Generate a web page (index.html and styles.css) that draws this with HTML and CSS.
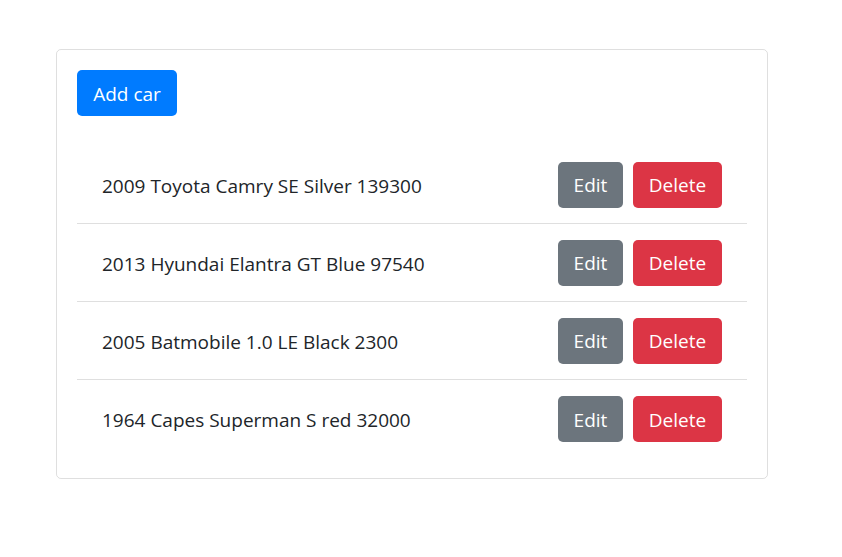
FILE: index.html
```html
<!DOCTYPE html>
<html>
<head>
<meta charset="utf-8">
<link rel="stylesheet" href="styles.css">
</head>
<body>
<div class="page">
  <div class="card">
    <div class="card-body">
      <button class="btn btn-primary">Add car</button>
      <ul class="list">
        <li class="item"><span class="label">2009 Toyota Camry SE Silver 139300</span><span class="actions"><button class="btn btn-secondary">Edit</button><button class="btn btn-danger">Delete</button></span></li>
        <li class="item"><span class="label">2013 Hyundai Elantra GT Blue 97540</span><span class="actions"><button class="btn btn-secondary">Edit</button><button class="btn btn-danger">Delete</button></span></li>
        <li class="item"><span class="label">2005 Batmobile 1.0 LE Black 2300</span><span class="actions"><button class="btn btn-secondary">Edit</button><button class="btn btn-danger">Delete</button></span></li>
        <li class="item"><span class="label">1964 Capes Superman S red 32000</span><span class="actions"><button class="btn btn-secondary">Edit</button><button class="btn btn-danger">Delete</button></span></li>
      </ul>
    </div>
  </div>
</div>
</body>
</html>
```
FILE: styles.css
```css
* { box-sizing: border-box; }
body {
  margin: 0;
  background: #fff;
  font-family: "Open Sans", "Noto Sans", sans-serif;
  color: #212529;
}
.page {
  padding: 49px 0 0 56px;
}
.card {
  width: 712px;
  border: 1px solid rgba(0,0,0,.125);
  border-radius: 5px;
}
.card-body {
  padding: 20px;
}
.btn {
  display: inline-flex;
  align-items: center;
  justify-content: center;
  height: 46px;
  padding: 1px 0 0;
  border: 1px solid transparent;
  border-radius: 5px;
  font-family: inherit;
  font-size: 19px;
  color: #fff;
  cursor: pointer;
}
.btn-primary { background: #007bff; width: 100px; }
.btn-secondary { background: #6c757d; width: 65px; }
.btn-danger { background: #dc3545; width: 89px; }
.list {
  list-style: none;
  margin: 30px 0 0;
  padding: 0;
}
.item {
  display: flex;
  align-items: center;
  justify-content: space-between;
  height: 78px;
  padding: 0 25px;
  border-bottom: 1px solid rgba(0,0,0,.125);
  font-size: 19px;
}
.label { padding-top: 2px; }
.item:last-child { border-bottom: none; }
.actions {
  display: flex;
  gap: 10px;
}
```
